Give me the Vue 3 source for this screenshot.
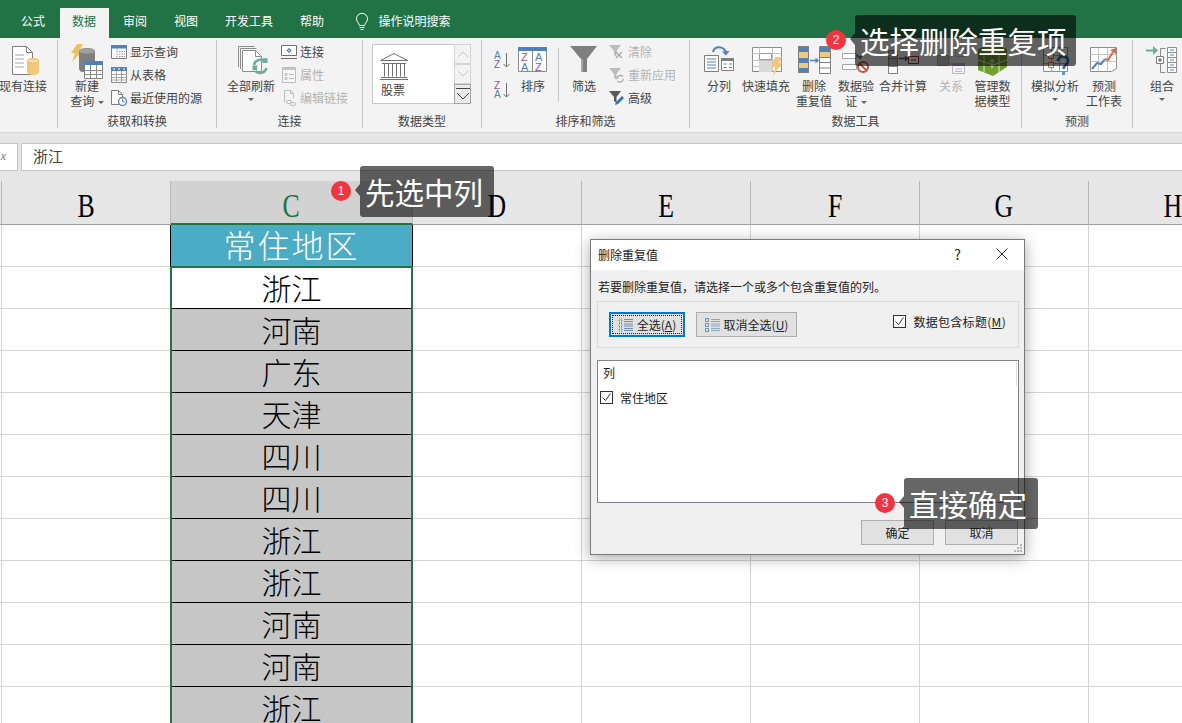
<script setup>
const tabs = ['公式', '数据', '审阅', '视图', '开发工具', '帮助'];
const columns = ['B', 'C', 'D', 'E', 'F', 'G', 'H'];
const regions = ['浙江', '河南', '广东', '天津', '四川', '四川', '浙江', '浙江', '河南', '河南', '浙江'];
</script>

<template>
  <div class="page">
    <div class="tabbar">
      <div v-for="tab in tabs" :key="tab" class="tab" :class="{ active: tab === '数据' }">{{ tab }}</div>
      <svg class="bulb" width="16" height="20" viewBox="0 0 16 20" fill="none" stroke="#fff" stroke-width="1">
        <path d="M5.5 13.5C5 11 2.500 10 2.500 6.800a5.500 5.500 0 0 1 11 0C13.500 10 11 11 10.500 13.500z" />
        <path d="M5.500 15.500h5M6.500 17.500h3" />
      </svg>
      <div class="search">操作说明搜索</div>
    </div>

    <div class="ribbon">
      <div class="group g0">
        <div class="group-body">
          <div class="big w46">
            <svg width="48" height="38" viewBox="0 0 48 38" fill="none">
              <path d="M13.500 5.500h14l6 6v22h-20z" fill="#fff" stroke="#7f7f7f" />
              <path d="M27.500 5.500v6h6" stroke="#7f7f7f" />
              <path d="M16 14h9M16 18h9M16 22h9M16 26h9" stroke="#a6a6a6" />
              <path d="M28 20c0-4 12-4 12 0v11c0 4-12 4-12 0z" fill="#f0c87a" />
              <ellipse cx="34" cy="20" rx="6" ry="2.200" fill="#f7dca6" stroke="#e0b25c" stroke-width=".6" />
            </svg>
            <div class="big-text">现有连接</div>
          </div>
        </div>
        <div class="group-label"></div>
      </div>

      <div class="group g1">
        <div class="group-body">
          <div class="big w34">
            <svg width="48" height="38" viewBox="0 0 48 38" fill="none">
              <path d="M14 3h6l-4 7h3L9 21l3-9H8z" fill="#f0c060" />
              <path d="M16 10c0-4 16-4 16 0v21H20a4 4 0 0 1-4-4z" fill="#7f7f7f" />
              <ellipse cx="24" cy="10" rx="8" ry="2.800" fill="#a0a0a0" />
              <path d="M21.500 20.500h18v17h-18z" fill="#fff" stroke="#7f7f7f" />
              <path d="M21 20h19v4H21z" fill="#4f81bd" />
              <path d="M21.500 29.500h18M21.500 33.500h18M27.500 24v13M33.500 24v13" stroke="#8c8c8c" />
            </svg>
            <div class="big-text">新建<br />查询 <i class="caret inline"></i></div>
          </div>
          <div class="small-list ml7">
            <div class="small-row">
              <svg width="16" height="16" viewBox="0 0 16 16" fill="none">
                <path d="M.5 1.500h15v13H.5z" fill="#fff" stroke="#7f7f7f" />
                <path d="M0 1h16v3.500H0z" fill="#4f81bd" />
                <path d="M6 4.500v10M8 7.500h6M8 10h6M8 12.500h6" stroke="#8c8c8c" stroke-dasharray="1.500 1" />
              </svg>
              <span>显示查询</span>
            </div>
            <div class="small-row">
              <svg width="16" height="16" viewBox="0 0 16 16" fill="none">
                <path d="M.5 .500h15v15H.5z" fill="#fff" stroke="#8c8c8c" />
                <path d="M0 0h16v4H0z" fill="#4f81bd" />
                <path d="M2 2h2M7 2h2M12 2h2" stroke="#fff" />
                <path d="M.5 7.500h15M.5 10.500h15M.5 13h15M5.500 4v12M10.500 4v12" stroke="#a6a6a6" />
              </svg>
              <span>从表格</span>
            </div>
            <div class="small-row">
              <svg width="16" height="16" viewBox="0 0 16 16" fill="none">
                <path d="M.5 .500h7l4 4v10H.5z" fill="#fff" stroke="#7f7f7f" />
                <path d="M7.500 .500v4h4" stroke="#7f7f7f" />
                <circle cx="11.500" cy="11.500" r="4" fill="#fff" stroke="#4f81bd" stroke-width="1.300" />
                <path d="M11.500 9v2.800h2.200" stroke="#4f81bd" />
              </svg>
              <span>最近使用的源</span>
            </div>
          </div>
        </div>
        <div class="group-label">获取和转换</div>
      </div>

      <div class="group g2">
        <div class="group-body">
          <div class="big w48">
            <svg width="48" height="38" viewBox="0 0 48 38" fill="none">
              <path d="M11.500 26V5.500h16" stroke="#8c8c8c" />
              <path d="M13.500 28V7.500h16" stroke="#8c8c8c" />
              <path d="M15.500 30.500v-21h13l6 6v15z" fill="#fff" stroke="#8c8c8c" />
              <path d="M28.500 9.500v6h6" stroke="#8c8c8c" />
              <path d="M27 24a6.500 6.500 0 0 1 11-3.500" stroke="#6fae9a" stroke-width="2.600" />
              <path d="M39.500 30a6.500 6.500 0 0 1-11 3" stroke="#6fae9a" stroke-width="2.600" transform="translate(0 -3)" />
              <path d="M36 17.500l4.500-.5v5h-5z M30 29l-4.500.5v-5h5z" fill="#6fae9a" />
            </svg>
            <div class="big-text">全部刷新<br /><i class="caret"></i></div>
          </div>
          <div class="small-list ml6">
            <div class="small-row">
              <svg width="16" height="16" viewBox="0 0 16 16" fill="none">
                <path d="M.5 1.500h15v10H.5zM0 14.500h16" stroke="#6f6f6f" fill="#fff" />
                <path d="M8 4l2.500 2.500L8 9 5.500 6.500z" fill="#2f75b5" />
                <path d="M8 5.500l1 1-1 1-1-1z" fill="#fff" />
              </svg>
              <span>连接</span>
            </div>
            <div class="small-row off">
              <svg width="16" height="16" viewBox="0 0 16 16" fill="none">
                <path d="M1.500 .500h13v15h-13z" fill="#f8f8f8" stroke="#bdbdbd" />
                <path d="M1 1h14v2H1z" fill="#c4c4c4" />
                <path d="M4 6.500h2v2H4zM4 10.500h2v2H4zM8 7.500h5M8 11.500h5" stroke="#bdbdbd" />
              </svg>
              <span>属性</span>
            </div>
            <div class="small-row off">
              <svg width="16" height="16" viewBox="0 0 16 16" fill="none" stroke="#bdbdbd">
                <path d="M3.500 12.500v-12h6l3 3v5M9.500 .500v3h3" />
                <rect x="5.500" y="10.500" width="5" height="3" rx="1.500" />
                <rect x="9.500" y="12.500" width="5" height="3" rx="1.500" />
              </svg>
              <span>编辑链接</span>
            </div>
          </div>
        </div>
        <div class="group-label">连接</div>
      </div>

      <div class="group g3">
        <div class="group-body">
          <div class="gallery">
            <div class="gallery-box">
              <svg width="30" height="28" viewBox="0 0 30 28" fill="none" stroke="#707070">
                <path d="M1.500 8.500L15 1.500l13.500 7zM3 11.500h24M2 25.500h26M1 27.500h28" />
                <path d="M5.500 11.500v13M9.500 11.500v13M13.500 11.500v13M17.500 11.500v13M21.500 11.500v13M25.500 11.500v13" />
              </svg>
              <div class="gallery-text">股票</div>
            </div>
            <div class="gallery-scroll">
              <div class="scroll-btn">
                <svg width="12" height="8" viewBox="0 0 12 8" fill="none" stroke="#c4c4c4"><path d="M1 7l5-5 5 5" /></svg>
              </div>
              <div class="scroll-btn">
                <svg width="12" height="8" viewBox="0 0 12 8" fill="none" stroke="#c4c4c4"><path d="M1 1l5 5 5-5" /></svg>
              </div>
              <div class="scroll-btn last">
                <svg width="14" height="14" viewBox="0 0 14 14" fill="none" stroke="#444"><path d="M0 1.500h14M1 6l6 6 6-6" /></svg>
              </div>
            </div>
          </div>
        </div>
        <div class="group-label">数据类型</div>
      </div>

      <div class="group g4">
        <div class="group-body">
          <div class="sort-col">
            <svg width="16" height="20" viewBox="0 0 16 20" fill="none">
              <text x="0" y="9" class="az blue">A</text>
              <text x="0" y="18" class="az purple">Z</text>
              <path d="M12.500 3v14M9.500 14l3 3 3-3" stroke="#707070" />
            </svg>
            <svg width="16" height="20" viewBox="0 0 16 20" fill="none">
              <text x="0" y="9" class="az purple">Z</text>
              <text x="0" y="18" class="az blue">A</text>
              <path d="M12.500 3v14M9.500 14l3 3 3-3" stroke="#707070" />
            </svg>
          </div>
          <div class="big w46">
            <svg width="48" height="38" viewBox="0 0 48 38" fill="none">
              <path d="M9.500 6.500h28v24h-28z" fill="#fff" stroke="#8c8c8c" />
              <path d="M9 6h29v4H9z" fill="#4f81bd" />
              <path d="M23.500 10v20" stroke="#8c8c8c" />
              <text x="12" y="20" class="az big-az purple">Z</text>
              <text x="12" y="30" class="az big-az blue">A</text>
              <text x="26" y="20" class="az big-az blue">A</text>
              <text x="26" y="30" class="az big-az purple">Z</text>
            </svg>
            <div class="big-text">排序</div>
          </div>
          <div class="vsep"></div>
          <div class="big w50">
            <svg width="48" height="38" viewBox="0 0 48 38" fill="none">
              <path d="M10 5h27L27 18v13h-6V18z" fill="#7f7f7f" />
              <path d="M21 18h2v13h-2z" fill="#a6a6a6" />
            </svg>
            <div class="big-text">筛选</div>
          </div>
          <div class="small-list">
            <div class="small-row off">
              <svg width="16" height="16" viewBox="0 0 16 16" fill="none">
                <path d="M0 1h12L7.500 7v6L5 11V7z" fill="#bdbdbd" />
                <path d="M7 8l6 6M13 8l-6 6" stroke="#a8a8a8" stroke-width="1.300" />
              </svg>
              <span>清除</span>
            </div>
            <div class="small-row off">
              <svg width="16" height="16" viewBox="0 0 16 16" fill="none">
                <path d="M0 1h12L7.500 7v6L5 11V7z" fill="#bdbdbd" />
                <path d="M8 12a3.500 3.500 0 0 1 6-2.500M14.500 12a3.500 3.500 0 0 1-6 2" stroke="#a8a8a8" stroke-width="1.300" />
              </svg>
              <span>重新应用</span>
            </div>
            <div class="small-row">
              <svg width="16" height="16" viewBox="0 0 16 16" fill="none">
                <path d="M0 1h12L7.500 7v6L5 11V7z" fill="#595959" />
                <path d="M6 15l1-3 6-6 2 2-6 6z" fill="#2f75b5" />
              </svg>
              <span>高级</span>
            </div>
          </div>
        </div>
        <div class="group-label">排序和筛选</div>
      </div>

      <div class="group g5">
        <div class="group-body tracks5">
          <div class="big">
            <svg width="48" height="38" viewBox="0 0 48 38" fill="none">
              <path d="M9.500 14.500h14v16h-14z" fill="#fff" stroke="#7f7f7f" />
              <path d="M12 18h9M12 21h9M12 24h9M12 27h9" stroke="#4f81bd" />
              <path d="M26.500 17.500h12v12h-12z" fill="#fff" stroke="#7f7f7f" />
              <path d="M26 17h13v3H26z" fill="#7f7f7f" />
              <path d="M28.500 23h3M34 23h3M28.500 26.500h3M34 26.500h3" stroke="#4f81bd" />
              <path d="M18 11c1-6 11-7 13 1" stroke="#4f81bd" stroke-width="2" />
              <path d="M27 10.500l4 4 3.500-4.500z" fill="#4f81bd" />
            </svg>
            <div class="big-text">分列</div>
          </div>
          <div class="big">
            <svg width="48" height="38" viewBox="0 0 48 38" fill="none">
              <path d="M10.500 6.500h29v24h-29z" fill="#fff" stroke="#8c8c8c" />
              <path d="M10.500 12.500h29M10.500 19.500h29M10.500 25.500h29M17.500 6.500v24M30.500 6.500v24" stroke="#c4c4c4" />
              <path d="M17 20h13v11H17z" fill="#d9d9d9" />
              <path d="M17.500 12.500h12v6h-12z" fill="#fff" stroke="#6fae9a" />
              <path d="M33 16h7l-3 6h3L31 35l2-9h-4z" fill="#f0c87a" />
            </svg>
            <div class="big-text">快速填充</div>
          </div>
          <div class="big">
            <svg width="48" height="38" viewBox="0 0 48 38" fill="none">
              <path d="M8 5h11v27H8z" fill="#7f7f7f" />
              <path d="M9 6h9v5H9zM9 17h9v5H9zM9 27h9v4H9z" fill="#4f81bd" />
              <path d="M9 11h9v6H9zM9 22h9v5H9z" fill="#f0c87a" />
              <path d="M20 19.500h7" stroke="#4f81bd" stroke-width="1.600" />
              <path d="M25.500 16.500l3.500 3-3.500 3z" fill="#4f81bd" />
              <path d="M29.500 5.500h11v27h-11z" fill="#fff" stroke="#7f7f7f" />
              <path d="M30 6h10v5H30z" fill="#4f81bd" />
              <path d="M30 11h10v5H30z" fill="#f0c87a" />
              <path d="M30 16.500h10M30 21.500h10M30 27h10" stroke="#7f7f7f" />
            </svg>
            <div class="big-text">删除<br />重复值</div>
          </div>
          <div class="big">
            <svg width="48" height="38" viewBox="0 0 48 38" fill="none">
              <path d="M10.500 12.500h14v5h-14zM10.500 23.500h14v5h-14z" fill="#fff" stroke="#a6a6a6" />
              <path d="M25 14l3 3 6-7" stroke="#3f6f5f" stroke-width="1.600" />
              <circle cx="31" cy="26" r="5" fill="#fff" stroke="#c8553d" stroke-width="2" />
              <path d="M27.500 22.500l7 7" stroke="#c8553d" stroke-width="2" />
            </svg>
            <div class="big-text">数据验<br />证 <i class="caret inline"></i></div>
          </div>
          <div class="big">
            <svg width="48" height="38" viewBox="0 0 48 38" fill="none">
              <path d="M9.500 9.500h9v23h-9z" fill="#fff" stroke="#7f7f7f" />
              <path d="M10 10h8v15H10z" fill="#bfbfbf" />
              <path d="M9.500 17.500h9M9.500 25.500h9" stroke="#7f7f7f" />
              <path d="M20 17.500h7" stroke="#2f5f8f" stroke-width="1.600" />
              <path d="M26 14.500l3.500 3-3.500 3z" fill="#2f5f8f" />
              <path d="M29.500 15.500h10v7h-10z" fill="#fff" stroke="#8a3a2a" />
              <path d="M32 19h5" stroke="#8a3a2a" />
            </svg>
            <div class="big-text">合并计算</div>
          </div>
          <div class="big off">
            <svg width="48" height="38" viewBox="0 0 48 38" fill="none">
              <path d="M10.500 14.500h11v10h-11z" fill="#c9c9c9" stroke="#a6a6a6" />
              <path d="M28.500 6.500h10v9h-10zM22 18l5-4M22 22l5 3" stroke="#bdbdbd" />
              <path d="M25.500 22.500h12v10h-12z" fill="#f6f3f8" stroke="#bdb4c6" />
              <path d="M25.500 23h12v2h-12z" fill="#bdb4c6" />
              <path d="M28 28h7M28 30.500h7" stroke="#bdb4c6" />
            </svg>
            <div class="big-text">关系</div>
          </div>
          <div class="big">
            <svg width="48" height="38" viewBox="0 0 48 38" fill="none">
              <path d="M9 8l15-5 14 5v18L24 35 9 29z" fill="#70a030" />
              <path d="M10 9l14-4 13 4-13 4z" fill="#8fbf4f" />
              <path d="M15 13v18M30 13v20M9 19l15 5 14-5" stroke="#fff" stroke-width=".8" />
              <path d="M23 27v-8M20.500 21l2.500-2.500 2.500 2.500" stroke="#fff" />
            </svg>
            <div class="big-text">管理数<br />据模型</div>
          </div>
        </div>
        <div class="group-label">数据工具</div>
      </div>

      <div class="group g6">
        <div class="group-body tracks6">
          <div class="big">
            <svg width="48" height="38" viewBox="0 0 48 38" fill="none">
              <path d="M12.500 6.500h24v24h-24z" fill="#fff" stroke="#8c8c8c" />
              <path d="M12.500 14.500h24M12.500 22.500h24M20.500 6.500v24M28.500 6.500v24" stroke="#a6a6a6" />
              <path d="M17.500 21.500h5v5h-5zM17.500 12.500h5v5h-5z" fill="#fff" stroke="#c77a3c" />
              <path d="M27 20c0-6 10-6 10 0 0 4-4.500 3.500-4.500 8" stroke="#2f6fa8" stroke-width="2.800" />
              <path d="M31 31h3v3h-3z" fill="#5b9bd5" />
            </svg>
            <div class="big-text">模拟分析<br /><i class="caret"></i></div>
          </div>
          <div class="big">
            <svg width="48" height="38" viewBox="0 0 48 38" fill="none">
              <path d="M10.500 6.500h26v21l-5 3H10.500z" fill="#fff" stroke="#8c8c8c" />
              <path d="M10.500 13.500h26M10.500 20.500h26M18.500 6.500v24M27.500 6.500v24" stroke="#c4c4c4" />
              <path d="M12 28l5-6 4 1 4-5" stroke="#4f81bd" stroke-width="2" />
              <path d="M25 18l3 1 5-8" stroke="#d8694a" stroke-width="2" />
              <path d="M30 9l6-2v6z" fill="#d8694a" />
            </svg>
            <div class="big-text">预测<br />工作表</div>
          </div>
        </div>
        <div class="group-label">预测</div>
      </div>

      <div class="group g7">
        <div class="group-body">
          <div class="big w58">
            <svg width="48" height="38" viewBox="0 0 48 38" fill="none">
              <path d="M8 9.500h10" stroke="#6fae9a" stroke-width="2" />
              <path d="M15 5l5 4.500-5 4.500z" fill="#6fae9a" />
              <path d="M27.500 7.500h-5v24h5" stroke="#8c8c8c" />
              <path d="M18.500 15.500h7v7h-7z" fill="#fff" stroke="#7f7f7f" />
              <path d="M20 19h4M22 17v4" stroke="#555" />
              <path d="M29.500 6.500h9v25h-9z" fill="#fff" stroke="#8c8c8c" />
              <path d="M29.500 11.500h9M29.500 16.500h9M29.500 21.500h9M29.500 26.500h9" stroke="#8c8c8c" />
              <path d="M32 9h4M32 14h4M32 19h4M32 24h4M32 29h4" stroke="#4f81bd" />
            </svg>
            <div class="big-text">组合<br /><i class="caret"></i></div>
          </div>
        </div>
        <div class="group-label"></div>
      </div>
    </div>

    <div class="formula-strip">
      <div class="fx-box">x</div>
      <div class="formula-input">浙江</div>
    </div>

    <div class="sheet">
      <div class="sheet-row head-row">
        <div class="cell stub"></div>
        <div v-for="col in columns" :key="col" class="cell head" :class="{ current: col === 'C' }">
          <span class="letter">{{ col }}</span>
        </div>
      </div>
      <div class="sheet-row">
        <div class="cell stub"></div>
        <div class="cell"></div>
        <div class="cell title">常住地区</div>
        <div v-for="n in 5" :key="n" class="cell"></div>
      </div>
      <div v-for="(region, i) in regions" :key="i" class="sheet-row">
        <div class="cell stub"></div>
        <div class="cell"></div>
        <div class="cell data" :class="{ dup: i > 0 }">{{ region }}</div>
        <div v-for="n in 5" :key="n" class="cell"></div>
      </div>
      <div class="selection"></div>
    </div>

    <div class="dialog">
      <div class="dialog-title">
        <span>删除重复值</span>
        <span class="help">?</span>
        <svg class="close" width="12" height="12" viewBox="0 0 12 12" fill="none" stroke="#333"><path d="M.5 .500l11 11M11.500 .500l-11 11" /></svg>
      </div>
      <div class="dialog-body">
        <div class="message">若要删除重复值，请选择一个或多个包含重复值的列。</div>
        <div class="option-box">
          <div class="btn focused">
            <svg width="15" height="14" viewBox="0 0 15 14" fill="none">
              <path d="M1 1h3v3H1zM1 5.500h3v3H1zM1 10h3v3H1z" stroke="#4a9a4a" stroke-dasharray="1 1" />
              <path d="M6 1.500h9M6 3.500h9M6 6h9M6 8h9M6 10.500h9M6 12.500h9" stroke="#6a8fb5" />
            </svg>
            <span>全选(<u>A</u>)</span>
          </div>
          <div class="btn plain">
            <svg width="15" height="14" viewBox="0 0 15 14" fill="none">
              <path d="M.5 .500h3v3h-3zM.5 5.500h3v3h-3zM.5 10.500h3v3h-3z" stroke="#6a8fb5" />
              <path d="M6 1.500h9M6 3.500h9M6 6h9M6 8h9M6 10.500h9M6 12.500h9" stroke="#8ca6c0" />
            </svg>
            <span>取消全选(<u>U</u>)</span>
          </div>
          <div class="has-header">
            <i class="check">
              <svg width="11" height="11" viewBox="0 0 11 11" fill="none" stroke="#333"><path d="M1.500 5.500l3 3 5-7" /></svg>
            </i>
            <span>数据包含标题(<u>M</u>)</span>
          </div>
        </div>
        <div class="list">
          <div class="list-head">列</div>
          <div class="list-row">
            <i class="check">
              <svg width="11" height="11" viewBox="0 0 11 11" fill="none" stroke="#333"><path d="M1.500 5.500l3 3 5-7" /></svg>
            </i>
            <span>常住地区</span>
          </div>
          <div class="list-bar"></div>
        </div>
        <div class="actions">
          <div class="btn action">确定</div>
          <div class="btn action">取消</div>
        </div>
      </div>
      <svg class="grip" width="10" height="10" viewBox="0 0 10 10" fill="#b4b4b4">
        <path d="M7 1h2v2H7zM4 4h2v2H4zM7 4h2v2H7zM1 7h2v2H1zM4 7h2v2H4zM7 7h2v2H7z" />
      </svg>
    </div>

    <div class="tip tip1">先选中列</div>
    <div class="tip tip2">选择删除重复项</div>
    <div class="tip tip3">直接确定</div>
    <div class="badge b1">1</div>
    <div class="badge b2">2</div>
    <div class="badge b3">3</div>
  </div>
</template>

<style scoped>
.page {
  position: relative;
  width: 1182px;
  height: 723px;
  overflow: hidden;
  background: #fff;
  color: #444;
  font-family: "Noto Sans CJK SC", "Noto Sans", sans-serif;
  font-size: 12px;
}

.tabbar {
  display: flex;
  align-items: flex-end;
  gap: 2px;
  height: 38px;
  padding-left: 8.500px;
  box-sizing: border-box;
  background: #217346;
  color: #fff;
}

.tab {
  height: 30px;
  line-height: 25px;
  padding: 0 12.500px;
}

.tab.active {
  background: #f3f3f3;
  color: #217346;
}

.bulb {
  margin: 0 0 6px 15px;
}

.search {
  height: 30px;
  line-height: 25px;
  margin-left: 7px;
}

.ribbon {
  display: flex;
  height: 95px;
  padding: 2px 0 4px;
  box-sizing: border-box;
  background: #f3f3f3;
  border-bottom: 1px solid #d8d8d8;
}

.group {
  display: flex;
  flex-direction: column;
  flex: none;
  box-sizing: border-box;
  border-right: 1px solid #c6c6c6;
}

.g0 { width: 58px; }
.g1 { width: 159px; padding-left: 12px; }
.g2 { width: 146px; padding-left: 10px; }
.g3 { width: 119px; padding-left: 9px; }
.g4 { width: 208px; padding-left: 12px; }
.g5 { width: 332px; }
.g6 { width: 111px; }
.g7 { flex: 1; border-right: 0; }

.group-body {
  display: flex;
  height: 73px;
}

.tracks5 {
  display: grid;
  grid-template-columns: 58px 36px 60px 24px 70px 26px 57px;
}

.tracks6 {
  display: grid;
  grid-template-columns: 66px 32px;
}

.group-label {
  height: 15px;
  line-height: 15px;
  text-align: center;
}

.g1 .group-label { margin-left: -12px; }
.g2 .group-label { margin-left: -10px; }
.g3 .group-label { margin-left: -9px; }
.g4 .group-label { margin-left: -12px; }

.big {
  display: flex;
  flex-direction: column;
  align-items: center;
  flex: none;
}

.big svg {
  flex: none;
  margin: 1px 0 -1px;
}

.big-text {
  line-height: 15px;
  text-align: center;
  white-space: nowrap;
}

.big.off .big-text,
.small-row.off {
  color: #b4b4b4;
}

.w34 { width: 34px; }
.w46 { width: 46px; }
.w48 { width: 48px; }
.w50 { width: 50px; }
.w58 { width: 58px; }
.ml6 { margin-left: 6px; }
.ml7 { margin-left: 7px; }

.caret {
  display: block;
  width: 0;
  height: 0;
  margin: 5px auto 0;
  border-left: 3px solid transparent;
  border-right: 3px solid transparent;
  border-top: 3px solid #666;
}

.caret.inline {
  display: inline-block;
  margin: 0 0 2px 1px;
}

.small-list {
  display: flex;
  flex-direction: column;
}

.small-row {
  display: flex;
  align-items: center;
  gap: 3px;
  height: 23px;
  white-space: nowrap;
}

.small-row svg {
  flex: none;
}

.gallery {
  display: flex;
  height: 60px;
  margin-top: 4px;
}

.gallery-box {
  width: 82px;
  box-sizing: border-box;
  padding: 7px 0 0 6px;
  background: #fff;
  border: 1px solid #c6c6c6;
  border-right: 0;
}

.gallery-box svg {
  display: block;
}

.gallery-text {
  margin: 1px 0 0 2px;
  line-height: 17px;
}

.gallery-scroll {
  display: flex;
  flex-direction: column;
  width: 17px;
}

.scroll-btn {
  display: flex;
  align-items: center;
  justify-content: center;
  height: 20px;
  box-sizing: border-box;
  border: 1px solid #d4d4d4;
  background: #f3f3f3;
}

.scroll-btn.last {
  border-color: #a6a6a6;
  background: #ececec;
}

.sort-col {
  display: flex;
  flex-direction: column;
  gap: 10px;
  width: 16px;
  margin-top: 10px;
}

.az {
  font-family: "Liberation Sans", sans-serif;
  font-size: 10px;
  font-weight: 400;
}

.big-az {
  font-size: 11px;
}

.blue { fill: #4f81bd; }
.purple { fill: #8e54a8; }

.vsep {
  width: 1px;
  height: 54px;
  margin: 8px 0 0 2px;
  background: #c6c6c6;
}

.formula-strip {
  display: flex;
  align-items: flex-start;
  height: 48px;
  padding-top: 10px;
  box-sizing: border-box;
  background: #e6e6e6;
}

.fx-box {
  width: 18px;
  height: 28px;
  line-height: 24px;
  box-sizing: border-box;
  padding-right: 11px;
  text-align: right;
  font-family: "Liberation Serif", serif;
  font-style: italic;
  color: #777;
  background: #fff;
  border: 1px solid #c6c6c6;
  border-left: 0;
}

.formula-input {
  flex: 1;
  height: 28px;
  line-height: 23px;
  margin-left: 3px;
  padding-left: 11px;
  box-sizing: border-box;
  font-size: 15px;
  background: #fff;
  border: 1px solid #c6c6c6;
  border-right: 0;
}

.sheet {
  position: relative;
  height: 542px;
  overflow: hidden;
}

.sheet-row {
  display: grid;
  grid-template-columns: 2px 169px 242px 169px 169px 169px 169px 169px;
  grid-template-rows: 42px;
  height: 42px;
}

.head-row {
  grid-template-rows: 44px;
  height: 44px;
  background: #e6e6e6;
}

.cell {
  box-sizing: border-box;
  min-height: 0;
  border-right: 1px solid #d4d4d4;
  border-bottom: 1px solid #d4d4d4;
  text-align: center;
  font-family: "Liberation Serif", "Noto Sans CJK SC", serif;
  color: #000;
}

.cell.head {
  line-height: 50px;
  font-size: 33px;
  border-right-color: #b8b8b8;
  border-bottom: 1px solid #9e9e9e;
}

.letter {
  display: inline-block;
  transform: scaleX(0.78);
}

.head-row .stub {
  border-right-color: #b8b8b8;
  border-bottom: 1px solid #9e9e9e;
}

.cell.head.current {
  background: #d2d2d2;
  color: #217346;
  border-bottom: 2px solid #217346;
}

.cell.title {
  line-height: 44px;
  font-size: 32px;
  letter-spacing: 2px;
  font-weight: 300;
  color: #fff;
  background: #4bacc6;
  border-right-color: #000;
  box-shadow: -1px 0 0 #000;
}

.cell.data {
  line-height: 45px;
  font-size: 30px;
  font-weight: 300;
  border-right-color: #000;
  border-bottom-color: #000;
}

.cell.dup {
  background: #c6c6c6;
}

.selection {
  position: absolute;
  top: 85px;
  left: 170px;
  width: 243px;
  height: 470px;
  box-sizing: border-box;
  border: 2px solid #217346;
  pointer-events: none;
}

.dialog {
  position: absolute;
  top: 239px;
  left: 590px;
  width: 435px;
  height: 316px;
  box-sizing: border-box;
  background: #f0f0f0;
  border: 1px solid #7a7a7a;
  box-shadow: 0 3px 14px rgba(0, 0, 0, 0.35);
  color: #222;
}

.dialog-title {
  display: flex;
  align-items: center;
  height: 30px;
  padding: 0 0 2px 7px;
  box-sizing: border-box;
  background: #fff;
}

.help {
  margin-left: auto;
  font-size: 14px;
}

.close {
  margin: 0 16px 0 35px;
}

.dialog-body {
  display: flex;
  flex-direction: column;
  padding: 0 5px 0 6px;
}

.message {
  height: 31px;
  padding: 9px 0 0 1px;
  box-sizing: border-box;
  line-height: 16px;
}

.option-box {
  display: flex;
  align-items: center;
  height: 47px;
  padding: 0 12px 0 11px;
  box-sizing: border-box;
  border: 1px solid #dcdcdc;
}

.btn {
  display: flex;
  align-items: center;
  justify-content: center;
  gap: 4px;
  height: 25px;
  box-sizing: border-box;
  background: #e1e1e1;
  border: 1px solid #adadad;
}

.btn.focused {
  width: 76px;
  border: 2px solid #0078d7;
  outline: 1px dotted #222;
  outline-offset: -4px;
}

.btn.plain {
  width: 101px;
  margin-left: 11px;
}

.has-header {
  display: flex;
  align-items: center;
  gap: 7px;
  margin: -6px 0 0 auto;
  letter-spacing: 0.3px;
}

.check {
  display: flex;
  align-items: center;
  justify-content: center;
  width: 13px;
  height: 13px;
  box-sizing: border-box;
  background: #fff;
  border: 1px solid #333;
}

.list {
  position: relative;
  height: 143px;
  margin-top: 12px;
  box-sizing: border-box;
  background: #fff;
  border: 1px solid #82828c;
}

.list-head {
  padding: 4px 0 0 5px;
  line-height: 16px;
}

.list-row {
  display: flex;
  align-items: center;
  gap: 7px;
  margin-top: 8px;
  padding-left: 2px;
}

.list-bar {
  position: absolute;
  top: 1px;
  right: 1px;
  width: 1px;
  height: 24px;
  background: #e0e0e0;
}

.actions {
  display: flex;
  justify-content: flex-end;
  gap: 11px;
  margin-top: 17px;
  padding-right: 1px;
}

.btn.action {
  width: 73px;
}

.grip {
  position: absolute;
  right: 1px;
  bottom: 1px;
}

.tip {
  position: absolute;
  height: 51px;
  padding: 0 5px;
  box-sizing: border-box;
  border-radius: 3px;
  background: rgba(0, 0, 0, 0.6);
  color: #fff;
  font-size: 29.500px;
  line-height: 50px;
  white-space: nowrap;
}

.tip::before {
  content: "";
  position: absolute;
  top: 18px;
  left: -5px;
  border-top: 6px solid transparent;
  border-bottom: 6px solid transparent;
  border-right: 5px solid rgba(0, 0, 0, 0.6);
}

.tip1 { top: 166px; left: 360px; width: 134px; }
.tip2 { top: 15px; left: 855px; width: 221px; }
.tip3 { top: 478px; left: 904px; width: 134px; }

.badge {
  position: absolute;
  width: 20px;
  height: 20px;
  border-radius: 50%;
  background: #f5333f;
  color: #fff;
  font-family: "Liberation Sans", sans-serif;
  font-size: 12px;
  line-height: 20px;
  text-align: center;
}

.b1 { top: 181px; left: 331px; }
.b2 { top: 30px; left: 826px; }
.b3 { top: 493px; left: 875px; }
</style>

<style>
html,
body {
  margin: 0;
  overflow: hidden;
}
</style>
